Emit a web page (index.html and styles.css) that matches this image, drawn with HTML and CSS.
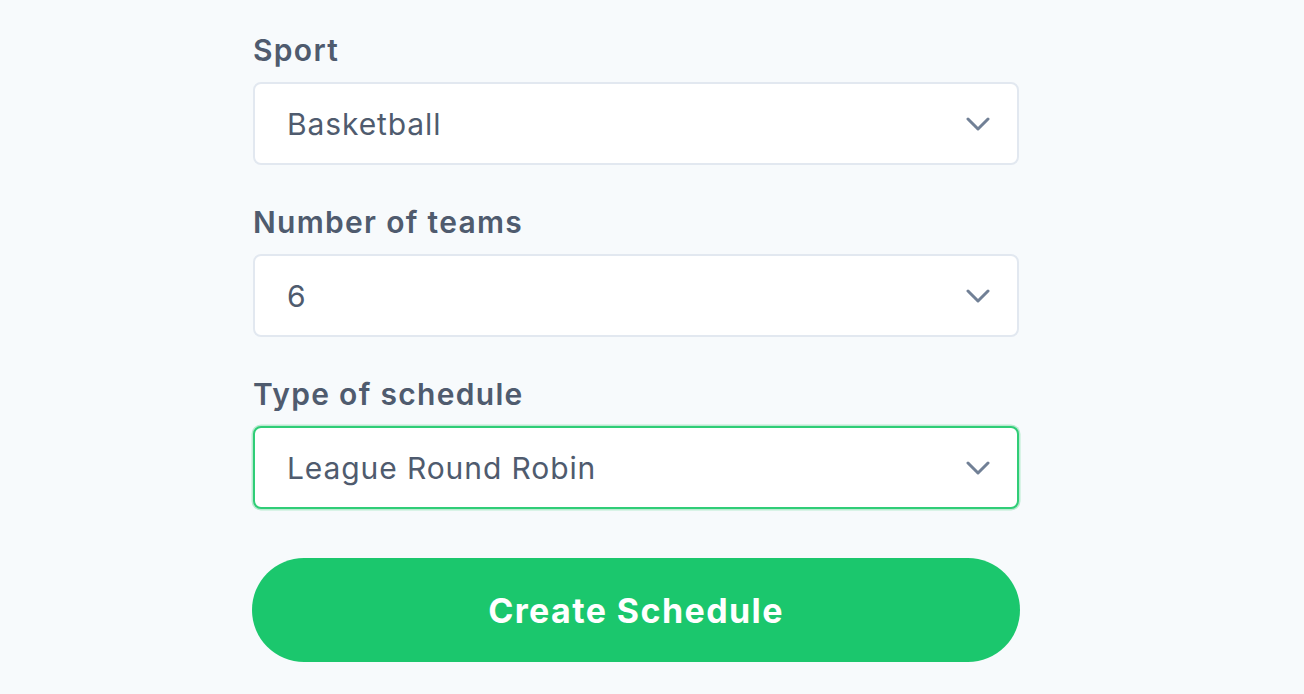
FILE: index.html
```html
<!DOCTYPE html>
<html lang="en">
<head>
<meta charset="utf-8">
<title>Create Schedule</title>
<link rel="stylesheet" href="styles.css">
</head>
<body>
<form class="form">
  <div class="field">
    <label class="label">Sport</label>
    <div class="select">
      <span class="value">Basketball</span>
      <svg class="chevron" width="24" height="14" viewBox="0 0 24 14"><polyline points="2,2 12,12 22,2" fill="none" stroke="#718096" stroke-width="3" stroke-linecap="round" stroke-linejoin="round"/></svg>
    </div>
  </div>
  <div class="field">
    <label class="label">Number of teams</label>
    <div class="select">
      <span class="value">6</span>
      <svg class="chevron" width="24" height="14" viewBox="0 0 24 14"><polyline points="2,2 12,12 22,2" fill="none" stroke="#718096" stroke-width="3" stroke-linecap="round" stroke-linejoin="round"/></svg>
    </div>
  </div>
  <div class="field">
    <label class="label">Type of schedule</label>
    <div class="select focused">
      <span class="value">League Round Robin</span>
      <svg class="chevron" width="24" height="14" viewBox="0 0 24 14"><polyline points="2,2 12,12 22,2" fill="none" stroke="#718096" stroke-width="3" stroke-linecap="round" stroke-linejoin="round"/></svg>
    </div>
  </div>
  <button type="button" class="button">Create Schedule</button>
</form>
</body>
</html>
```
FILE: styles.css
```css
html, body {
  margin: 0;
  padding: 0;
  background: #f7fafc;
  font-family: Inter, "Noto Sans", sans-serif;
}
.form {
  display: flex;
  flex-direction: column;
  width: 768px;
  margin-left: 252px;
  padding-top: 28px;
}
.field {
  display: flex;
  flex-direction: column;
  margin-bottom: 35px;
}
.field:last-of-type {
  margin-bottom: 49px;
}
.label {
  font-size: 30px;
  line-height: 42px;
  font-weight: 600;
  letter-spacing: 1.3px;
  color: #4f5b6e;
  padding-top: 1px;
  margin-bottom: 11px;
  padding-left: 1px;
}
.select {
  box-sizing: border-box;
  height: 83px;
  margin: 0 1px;
  background: #fff;
  border: 2px solid #e2e8f0;
  border-radius: 8px;
  display: flex;
  align-items: center;
  justify-content: space-between;
  padding: 0 27px 0 32px;
}
.select.focused {
  border-color: #2fcd77;
  box-shadow: 0 0 0 1.5px rgba(72, 207, 128, 0.35);
}
.value {
  font-size: 30px;
  letter-spacing: 0.9px;
  color: #4f5b6e;
}
.chevron {
  display: block;
}
.button {
  height: 104px;
  border: none;
  border-radius: 52px;
  background: #1bc76d;
  color: #fff;
  font-family: Inter, "Noto Sans", sans-serif;
  font-size: 34px;
  font-weight: 700;
  letter-spacing: 1.4px;
  padding-top: 2px;
  cursor: pointer;
}
```
